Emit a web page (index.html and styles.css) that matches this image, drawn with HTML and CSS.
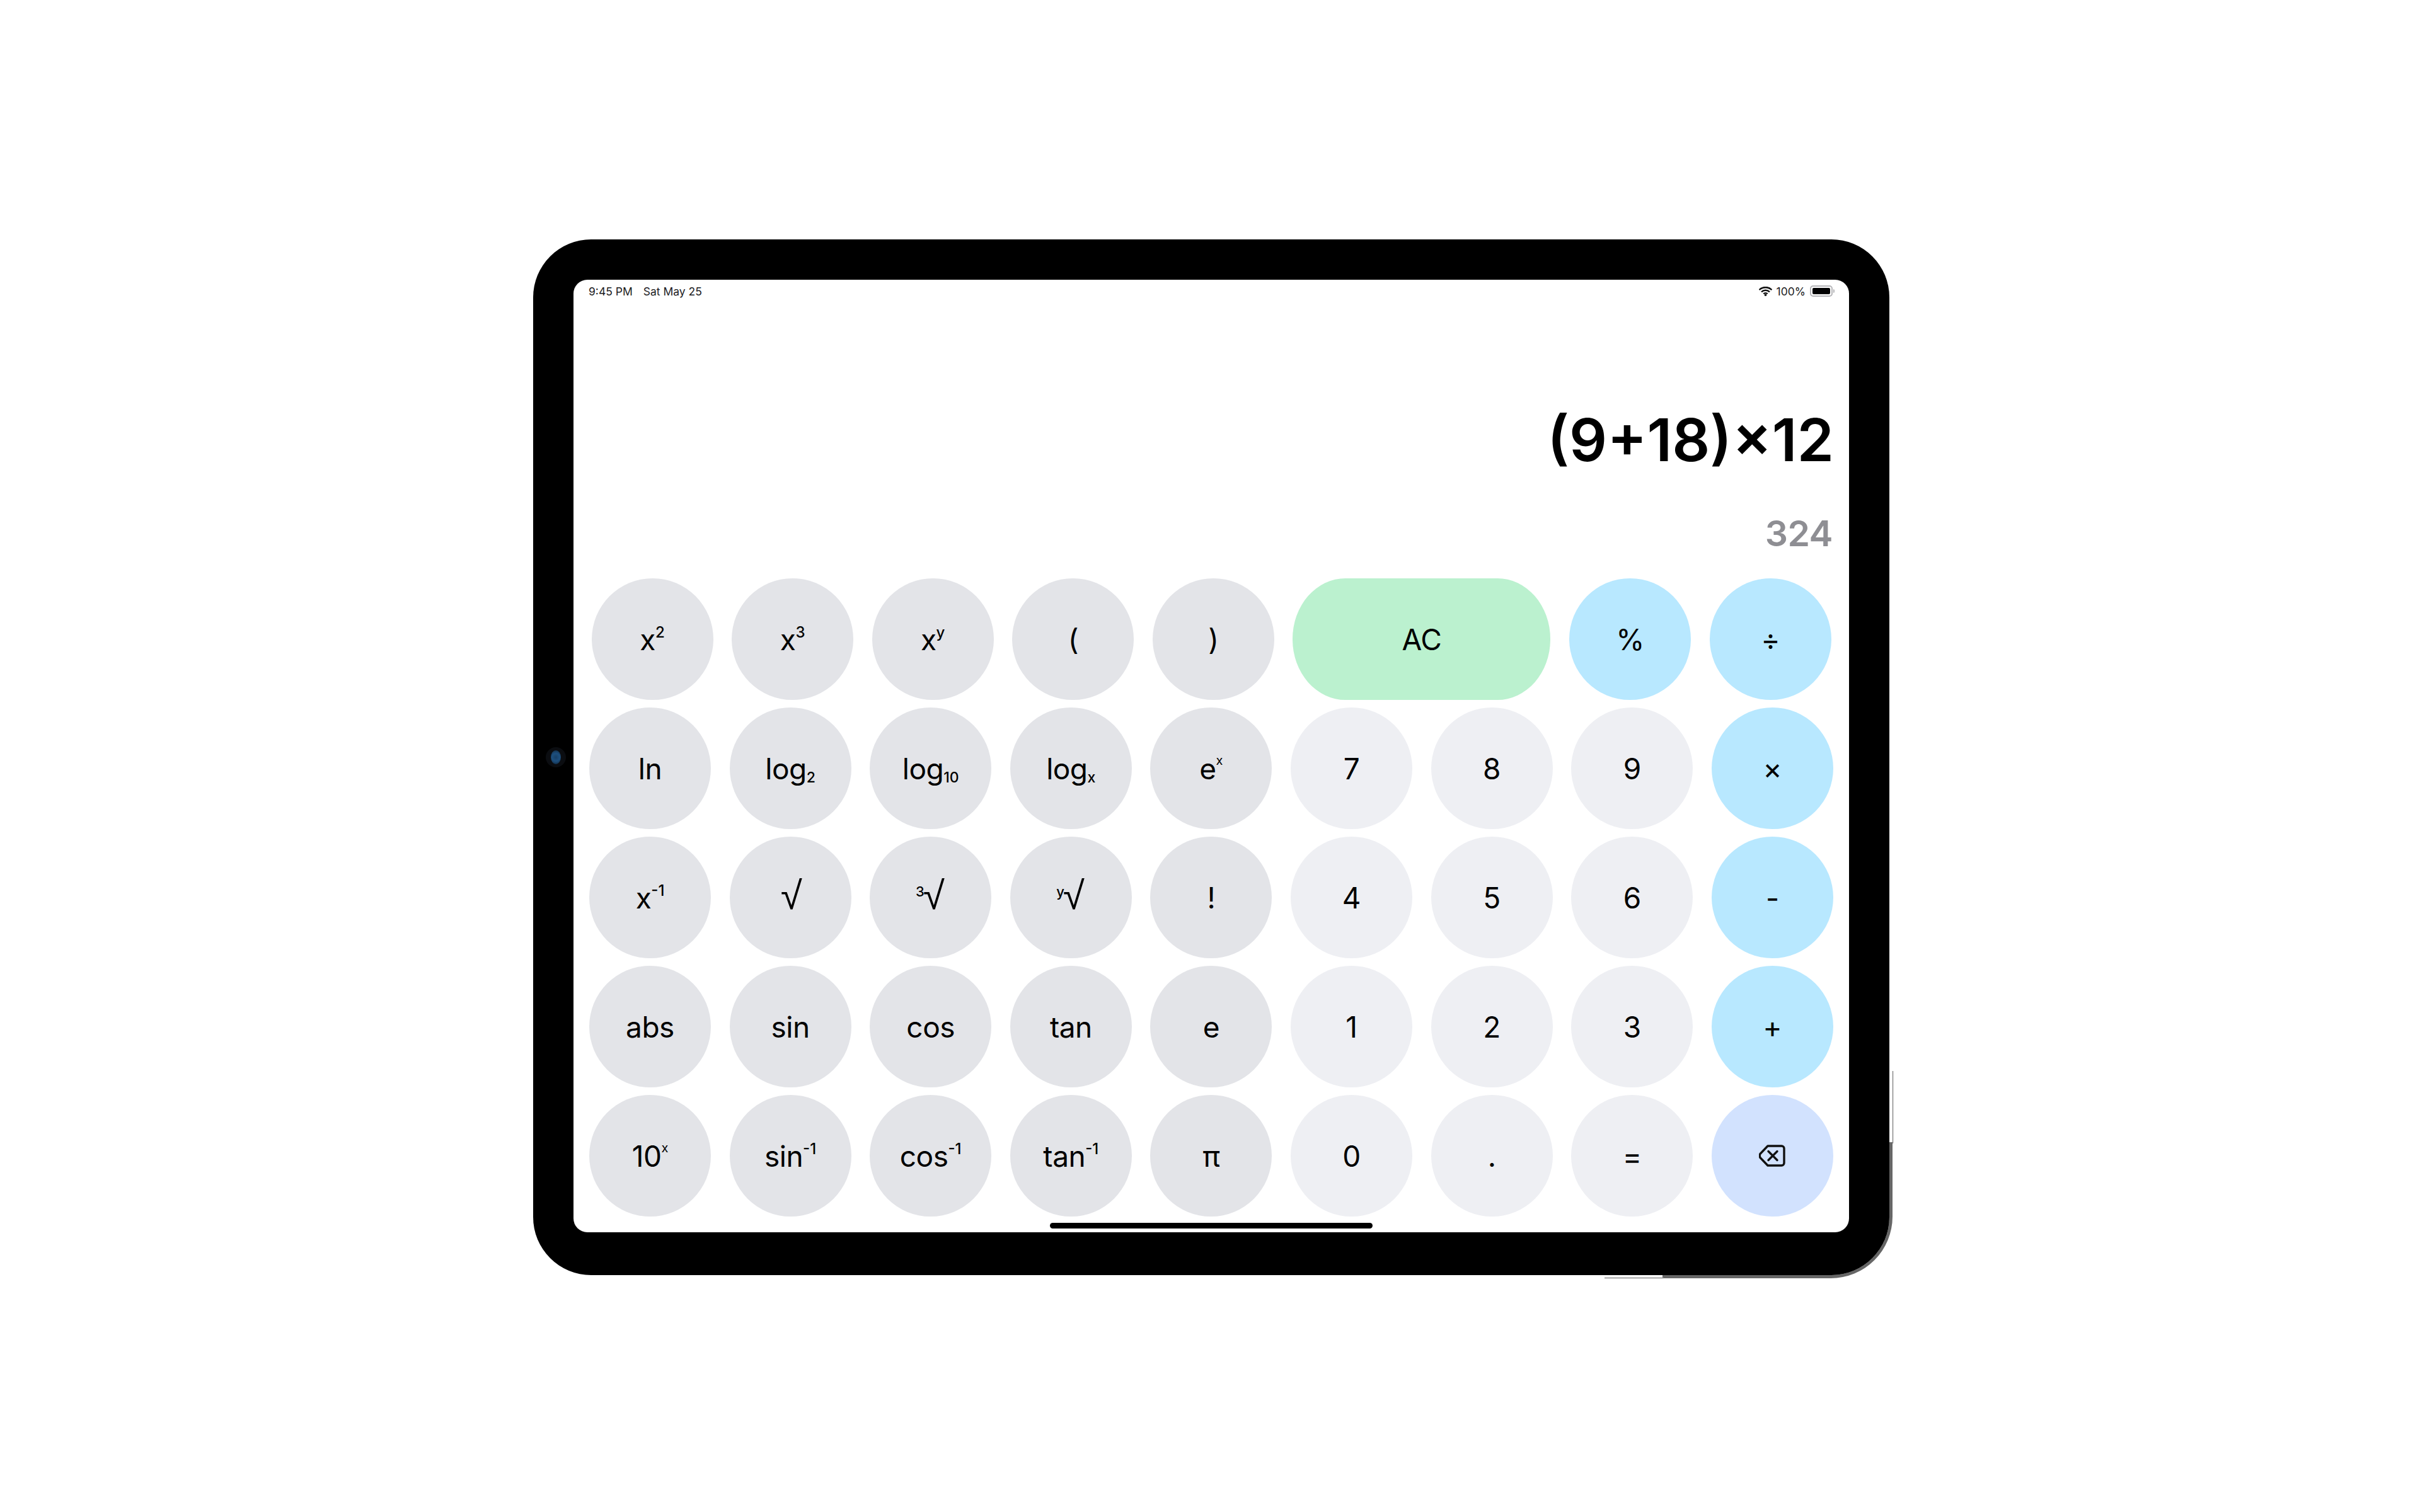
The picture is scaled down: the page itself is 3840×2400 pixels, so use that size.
FILE: index.html
```html
<!DOCTYPE html>
<html lang="en">
<head>
<meta charset="utf-8">
<title>Calculator</title>
<link rel="stylesheet" href="styles.css">
</head>
<body>
<div class="stage">
  <svg class="edge" viewBox="0 0 520 360" width="520" height="360" aria-hidden="true">
    <path class="edge-fill" d="M138 344V349H405A98 98 0 0 0 503 251V133H498V252A92 92 0 0 1 406 344Z"/>
    <path class="edge-line" d="M46 348.5H140M503.5 20V135"/>
  </svg>
  <div class="device">
    <div class="camera"><span class="lens"></span></div>
    <main class="screen">
      <header class="status">
        <div class="status-left"><span>9:45 PM</span><span>Sat May 25</span></div>
        <div class="status-right">
          <svg class="wifi" viewBox="0 0 21 15" width="21" height="15" aria-hidden="true">
            <path d="M0.6 5.2A14 14 0 0 1 20.4 5.2" />
            <path d="M4 8.4A9.4 9.4 0 0 1 17 8.4" />
            <path d="M7.3 11.4A4.8 4.8 0 0 1 13.7 11.4" />
            <circle cx="10.5" cy="13.2" r="1.8"/>
          </svg>
          <span>100%</span>
          <span class="battery"><span class="battery-level"></span></span>
        </div>
      </header>
      <section class="display">
        <div class="expression">(9+18)×12</div>
        <div class="result">324</div>
      </section>
      <section class="keypad">
        <div class="row row-top">
          <div class="key fn">x<sup>2</sup></div>
          <div class="key fn">x<sup>3</sup></div>
          <div class="key fn">x<sup>y</sup></div>
          <div class="key fn">(</div>
          <div class="key fn">)</div>
          <div class="key clear">AC</div>
          <div class="key op">%</div>
          <div class="key op">÷</div>
        </div>
        <div class="row">
          <div class="key fn">ln</div>
          <div class="key fn">log<sub>2</sub></div>
          <div class="key fn">log<sub>10</sub></div>
          <div class="key fn">log<sub>x</sub></div>
          <div class="key fn">e<sup class="small">x</sup></div>
          <div class="key num">7</div>
          <div class="key num">8</div>
          <div class="key num">9</div>
          <div class="key op">×</div>
        </div>
        <div class="row">
          <div class="key fn">x<sup>-1</sup></div>
          <div class="key fn"><span class="radical">√</span></div>
          <div class="key fn"><sup class="index">3</sup><span class="radical">√</span></div>
          <div class="key fn"><sup class="index">y</sup><span class="radical">√</span></div>
          <div class="key fn">!</div>
          <div class="key num">4</div>
          <div class="key num">5</div>
          <div class="key num">6</div>
          <div class="key op">-</div>
        </div>
        <div class="row">
          <div class="key fn">abs</div>
          <div class="key fn">sin</div>
          <div class="key fn">cos</div>
          <div class="key fn">tan</div>
          <div class="key fn">e</div>
          <div class="key num">1</div>
          <div class="key num">2</div>
          <div class="key num">3</div>
          <div class="key op">+</div>
        </div>
        <div class="row">
          <div class="key fn">10<sup class="small">x</sup></div>
          <div class="key fn">sin<sup>-1</sup></div>
          <div class="key fn">cos<sup>-1</sup></div>
          <div class="key fn">tan<sup>-1</sup></div>
          <div class="key fn">π</div>
          <div class="key num">0</div>
          <div class="key num">.</div>
          <div class="key num">=</div>
          <div class="key back">
            <svg viewBox="0 0 42 35" width="42" height="35" aria-hidden="true">
              <path d="M14 2H36A4 4 0 0 1 40 6V29A4 4 0 0 1 36 33H14L2 20.5Q0.5 17.5 2 14.5Z"/>
              <path d="M15 10.5L29 24.5M29 10.5L15 24.5"/>
            </svg>
          </div>
        </div>
      </section>
      <div class="home"></div>
    </main>
  </div>
</div>
</body>
</html>
```

FILE: styles.css
```css
* { box-sizing: border-box; }
html, body { margin: 0; background: #fff; }
body {
  width: 3840px;
  height: 2400px;
  overflow: hidden;
  font-family: Inter, "Liberation Sans", sans-serif;
  color: #000;
}
.stage {
  position: relative;
  width: 3840px;
  height: 2400px;
  padding: 380px 0 0 846px;
}
.edge { position: absolute; left: 2500px; top: 1680px; }
.edge-fill { fill: #666; }
.edge-line { fill: none; stroke: #8a8a8a; stroke-width: 1.5; }
.device {
  position: relative;
  width: 2152px;
  height: 1644px;
  padding: 64px 64px 68px;
  background: #000;
  border-radius: 92px;
}
.camera {
  position: absolute;
  left: 20px;
  top: 806px;
  width: 32px;
  height: 32px;
  border-radius: 50%;
  background: #0b0d11;
  display: flex;
  align-items: center;
  justify-content: center;
}
.lens {
  width: 16px;
  height: 22px;
  border-radius: 50%;
  background: radial-gradient(circle, #173f66 0%, #1d4f7e 45%, #0d2236 100%);
}
.screen {
  position: relative;
  width: 2024px;
  height: 1512px;
  background: #fff;
  border-radius: 22px;
  overflow: hidden;
  display: flex;
  flex-direction: column;
}
.status {
  height: 36px;
  flex: none;
  padding: 0 24px 0 24px;
  display: flex;
  justify-content: space-between;
  align-items: center;
  font-size: 17.5px;
  color: #1c1c1e;
}
.status-left { display: flex; gap: 17px; }
.status-right { display: flex; align-items: center; gap: 7px; }
.wifi { fill: #111; }
.wifi path { fill: none; stroke: #111; stroke-width: 2.6; }
.battery {
  position: relative;
  width: 36px;
  height: 18px;
  margin-right: 2px;
  border: 2px solid #b5b5b8;
  border-radius: 5px;
  padding: 2px;
  display: block;
}
.battery::after {
  content: "";
  position: absolute;
  right: -5px;
  top: 4px;
  width: 2px;
  height: 6px;
  background: #b5b5b8;
  border-radius: 0 2px 2px 0;
}
.battery-level {
  display: block;
  height: 100%;
  background: #000;
  border-radius: 2px;
}
.display {
  flex: none;
  height: 438px;
  padding-right: 26px;
  display: flex;
  flex-direction: column;
  align-items: flex-end;
}
.expression {
  margin-top: 158px;
  margin-right: -2px;
  font-size: 94px;
  line-height: 120px;
  font-weight: 600;
}
.result {
  margin-top: 54px;
  font-size: 57px;
  line-height: 70px;
  font-weight: 600;
  letter-spacing: -0.5px;
  color: #8e8e93;
}
.keypad {
  display: flex;
  flex-direction: column;
  gap: 12px;
  padding-left: 25px;
}
.row { display: flex; gap: 29.6px; }
.row-top { padding-left: 3.5px; }
.key {
  width: 193px;
  height: 193px;
  flex: none;
  border-radius: 50%;
  display: flex;
  align-items: center;
  justify-content: center;
  font-size: 46px;
  line-height: 1;
  letter-spacing: -0.5px;
}
.fn { background: #e3e4e8; }
.num { background: #eeeff3; }
.op { background: #b8e8ff; }
.clear { width: 409px; background: #bbf1cf; border-radius: 84px / 96px; }
.back { background: #d2e2fe; }
.back svg { fill: none; stroke: #111; stroke-width: 3.4; stroke-linejoin: round; stroke-linecap: round; }
sup, sub { font-size: 24px; line-height: 0; letter-spacing: 0; font-weight: 500; align-self: center; }
sup { transform: translateY(-11px); }
sub { font-size: 23px; transform: translateY(14px); }
sup.small { font-size: 20px; font-weight: 400; transform: translateY(-13px); }
.radical { font-family: "Liberation Sans", sans-serif; font-size: 62px; line-height: 1; margin-top: -6px; padding-left: 3px; }
sup.index { font-size: 22px; transform: translateY(-10px); margin-right: -5px; margin-left: -2px; }
.home {
  position: absolute;
  left: 756px;
  bottom: 6px;
  width: 512px;
  height: 9px;
  background: #000;
  border-radius: 5px;
}
```
